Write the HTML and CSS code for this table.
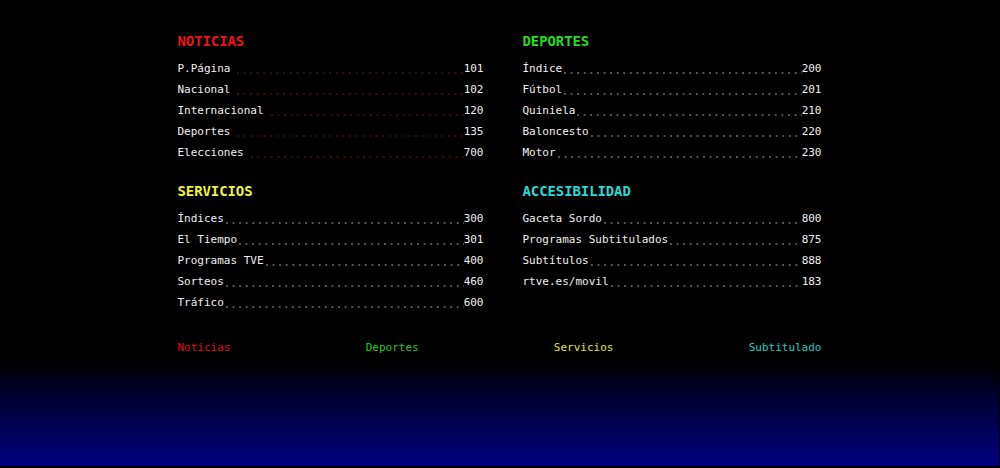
FILE: index.html
```html
<!DOCTYPE html>
<html lang="es">
<head>
<meta charset="utf-8">
<title>Teletexto</title>
<link rel="stylesheet" href="styles.css">
</head>
<body>
<div class="page">
  <main class="index">
    <section class="block red">
      <h2 class="title">NOTICIAS</h2>
      <div class="row"><span class="label">P.Página</span><span class="dots"></span><span class="num">101</span></div>
      <div class="row"><span class="label">Nacional</span><span class="dots"></span><span class="num">102</span></div>
      <div class="row"><span class="label">Internacional</span><span class="dots"></span><span class="num">120</span></div>
      <div class="row"><span class="label">Deportes</span><span class="dots"></span><span class="num">135</span></div>
      <div class="row"><span class="label">Elecciones</span><span class="dots"></span><span class="num">700</span></div>
    </section>
    <section class="block green">
      <h2 class="title">DEPORTES</h2>
      <div class="row"><span class="label">Índice</span><span class="dots"></span><span class="num">200</span></div>
      <div class="row"><span class="label">Fútbol</span><span class="dots"></span><span class="num">201</span></div>
      <div class="row"><span class="label">Quiniela</span><span class="dots"></span><span class="num">210</span></div>
      <div class="row"><span class="label">Baloncesto</span><span class="dots"></span><span class="num">220</span></div>
      <div class="row"><span class="label">Motor</span><span class="dots"></span><span class="num">230</span></div>
    </section>
    <section class="block yellow">
      <h2 class="title">SERVICIOS</h2>
      <div class="row"><span class="label">Índices</span><span class="dots"></span><span class="num">300</span></div>
      <div class="row"><span class="label">El Tiempo</span><span class="dots"></span><span class="num">301</span></div>
      <div class="row"><span class="label">Programas TVE</span><span class="dots"></span><span class="num">400</span></div>
      <div class="row"><span class="label">Sorteos</span><span class="dots"></span><span class="num">460</span></div>
      <div class="row"><span class="label">Tráfico</span><span class="dots"></span><span class="num">600</span></div>
    </section>
    <section class="block cyan">
      <h2 class="title">ACCESIBILIDAD</h2>
      <div class="row"><span class="label">Gaceta Sordo</span><span class="dots"></span><span class="num">800</span></div>
      <div class="row"><span class="label">Programas Subtitulados</span><span class="dots"></span><span class="num">875</span></div>
      <div class="row"><span class="label">Subtítulos</span><span class="dots"></span><span class="num">888</span></div>
      <div class="row"><span class="label">rtve.es/movil</span><span class="dots"></span><span class="num">183</span></div>
    </section>
  </main>
  <nav class="fastext">
    <span class="key key-red">Noticias</span>
    <span class="key key-green">Deportes</span>
    <span class="key key-yellow">Servicios</span>
    <span class="key key-cyan">Subtitulado</span>
  </nav>
  <div class="glow"></div>
</div>
</body>
</html>
```

FILE: styles.css
```css
html, body {
  margin: 0;
  padding: 0;
  background: #000;
}

body {
  font-family: "DejaVu Sans Mono", "Liberation Mono", monospace;
  color: #f0f0f0;
}

.page {
  height: 466px;
  display: flex;
  flex-direction: column;
  border-bottom: 2px solid #000;
  border-right: 1px solid #000;
  overflow: hidden;
}

.index {
  width: 644px;
  margin: 0 auto;
  padding-top: 31px;
  display: grid;
  grid-template-columns: 306px 299px;
  column-gap: 39px;
  row-gap: 18px;
}

.title {
  margin: 0 0 7px 0;
  font-size: 14px;
  line-height: 20px;
  font-weight: bold;
  letter-spacing: -0.1px;
}

.row {
  display: flex;
  font-size: 11px;
  line-height: 21px;
  white-space: nowrap;
}

.label,
.num {
  flex: none;
}

.dots {
  --dot: #555;
  flex: 1;
  margin: 0;
  background-image: linear-gradient(to right, var(--dot) 1.5px, transparent 1.5px);
  background-size: 6.6px 1.5px;
  background-repeat: repeat-x;
  background-position: left 2px top 14px;
}

.red .title { color: #ee1414; }
.red .dots { --dot: #3d0d0d; margin-left: 5px; }
.green .title { color: #22dd22; }
.yellow .title { color: #f2f23a; }
.cyan .title { color: #26dada; }

.fastext {
  width: 644px;
  margin: 27px auto 0;
  display: flex;
  justify-content: space-between;
  font-size: 11px;
  line-height: 16px;
}

.key-red { color: #e01010; }
.key-green { color: #22cc22; }
.key-yellow { color: #e0e040; }
.key-cyan { color: #2ac8c8; }

.glow {
  flex: 1;
  margin-top: 8px;
  background: linear-gradient(to bottom, #000 0%, #00002e 30%, #000080 100%);
}
```
